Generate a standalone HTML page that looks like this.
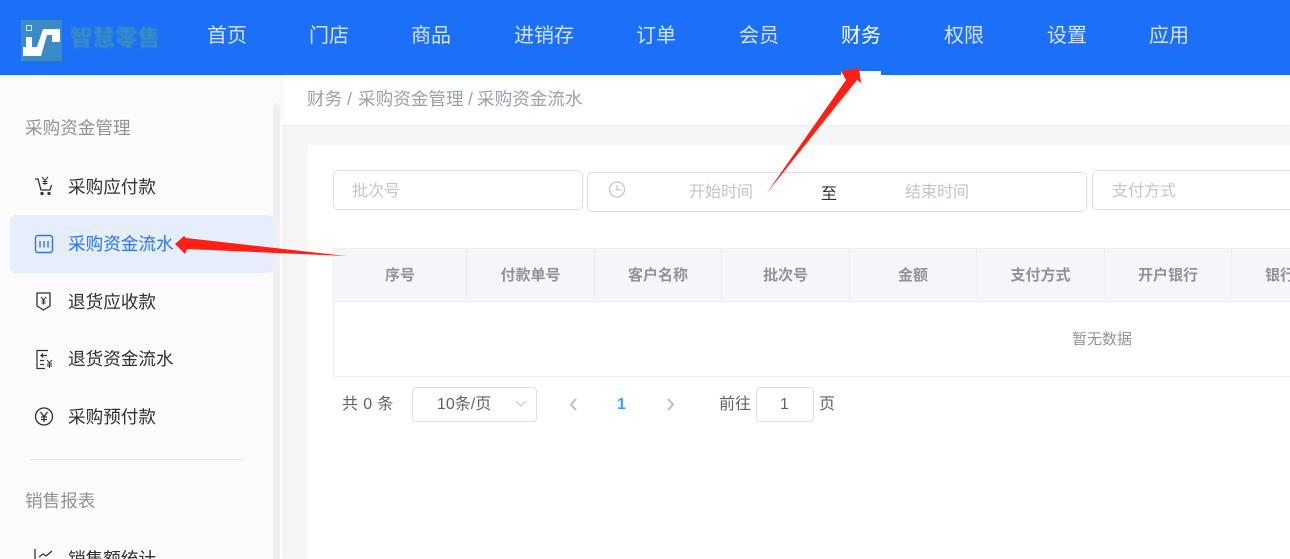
<!DOCTYPE html>
<html lang="zh"><head><meta charset="utf-8"><title>采购资金流水</title>
<style>
*{box-sizing:border-box}
html,body{margin:0;padding:0;width:1290px;height:559px;overflow:hidden}
#wrap{position:relative;width:1290px;height:559px;overflow:hidden;background:#f5f6f8;font-family:"Liberation Sans","Noto Sans CJK SC",sans-serif;font-size:14px;color:#606266}
.a{position:absolute;white-space:nowrap}
#top{left:0;top:0;width:1290px;height:75px;background:#1c70f8}
.n{top:22px;font-size:20px;line-height:28px;color:#d3e2fd}
#side{left:0;top:75px;width:283px;height:484px;background:#fbfbfc;box-shadow:1px 0 3px rgba(0,0,0,.04)}
.g{left:25px;font-size:17.6px;line-height:26px;color:#909399}
.m{left:68px;font-size:17.6px;line-height:26px;color:#303133}
.ic{position:absolute;left:32px}
.box{border:1px solid #dcdfe6;border-radius:5px;background:#fff}
.ph{font-size:16px;line-height:22px;color:#c0c4cc}
.bc{top:87px;font-size:17.6px;line-height:24px;color:#97a0ad}
.th{top:249px;height:52px;line-height:53px;font-size:15px;font-weight:700;color:#909399;text-align:center;border-right:1px solid #ebeef5}
.pg{font-size:16px;line-height:22px}
</style></head><body><div id="wrap">
<div class="a" id="top"></div>
<svg class="a" style="left:21px;top:20px" width="41" height="41" viewBox="0 0 41 41"><rect width="41" height="41" fill="#3d8bc4"/><rect x="5.500" y="5.500" width="5" height="5" fill="none" stroke="#cfe3f2"/><path d="M2 36V27H5V17H11V27H16L22 9H39V22H31V15H26L20 36Z" fill="#fff"/></svg>
<div class="a" style="left:70px;top:24px;font-size:22.500px;line-height:30px;font-weight:700;color:#3b90bd;filter:blur(.8px)">智慧零售</div>
<div class="a n" style="left:207px">首页</div>
<div class="a n" style="left:309px">门店</div>
<div class="a n" style="left:411px">商品</div>
<div class="a n" style="left:514px">进销存</div>
<div class="a n" style="left:636px">订单</div>
<div class="a n" style="left:739px">会员</div>
<div class="a n" style="left:841px;color:#fff">财务</div>
<div class="a n" style="left:944px">权限</div>
<div class="a n" style="left:1047px">设置</div>
<div class="a n" style="left:1149px">应用</div>
<div class="a" style="left:841px;top:71px;width:40px;height:4px;background:#fff"></div>

<div class="a" id="side"></div>
<div class="a" style="left:273px;top:103px;width:7px;height:456px;background:#f0f0f1;border-radius:4px 4px 0 0"></div>
<div class="a" style="left:10px;top:215px;width:263px;height:58px;background:#e6edfb;border-radius:6px"></div>
<div class="a g" style="top:115px">采购资金管理</div>
<div class="a m" style="top:174px">采购应付款</div>
<div class="a m" style="top:231px;color:#2b74f6">采购资金流水</div>
<div class="a m" style="top:289px">退货应收款</div>
<div class="a m" style="top:346px">退货资金流水</div>
<div class="a m" style="top:404px">采购预付款</div>
<div class="a" style="left:30px;top:459px;width:215px;height:1px;background:#e8e8ea"></div>
<div class="a g" style="top:488px">销售报表</div>
<div class="a m" style="top:546px">销售额统计</div>

<svg class="ic" style="top:174px" width="24" height="24" viewBox="0 0 24 24" fill="none" stroke="#303133" stroke-width="1.300"><path d="M3 5h3l3 11h9l1.500-5"/><circle cx="10" cy="19.500" r="1" fill="#303133"/><circle cx="17" cy="19.500" r="1" fill="#303133"/><path d="M10 3l3 3.500L16 3M13 6.500V11M10.500 7.500h5M10.500 9.500h5" stroke-width="1"/></svg>
<svg class="ic" style="top:232px" width="24" height="24" viewBox="0 0 24 24" fill="none" stroke="#2b74f6" stroke-width="1.400"><rect x="3.500" y="3.500" width="17" height="17" rx="2.500"/><path d="M8 9v6.500M12 9v6.500M16 9v6.500"/></svg>
<svg class="ic" style="top:289px;left:31px" width="24" height="24" viewBox="0 0 24 24" fill="none" stroke="#303133" stroke-width="1.300"><path d="M6 4h13v13l-6.500 4L6 17z" stroke-linejoin="round"/><path d="M10 8l2.500 3L15 8M12.500 11v4.500M10.500 12h4M10.500 14h4" stroke-width="1"/></svg>
<svg class="ic" style="top:347px" width="24" height="24" viewBox="0 0 24 24" fill="none" stroke="#303133" stroke-width="1.200"><path d="M16 3.500H5v18h8"/><path d="M15 8.500H9M11 6.500l-2 2 2 2M8 13.500h4M8 17.500h4"/><path d="M15 13l2.500 3 2.500-3M17.500 16v5M15 17h5M15 19h5" stroke-width="1"/></svg>
<svg class="ic" style="top:404px" width="24" height="24" viewBox="0 0 24 24" fill="none" stroke="#303133" stroke-width="1.300"><circle cx="12" cy="12.500" r="8.500"/><path d="M8.500 8l3.500 4.500L15.500 8M12 12.500V18M9 13h6M9 15.500h6"/></svg>
<svg class="ic" style="top:546px" width="24" height="14" viewBox="0 0 24 14" fill="none" stroke="#303133" stroke-width="1.300"><path d="M3 3v11M7 11l4-3 3 2 6-5"/></svg>

<div class="a" style="left:283px;top:75px;width:1007px;height:50px;background:#fff;box-shadow:0 1px 2px rgba(0,0,0,.05)"></div>
<div class="a bc" style="left:307px">财务</div>
<div class="a bc" style="left:347px">/</div>
<div class="a bc" style="left:358px">采购资金管理</div>
<div class="a bc" style="left:468px">/</div>
<div class="a bc" style="left:477px">采购资金流水</div>
<div class="a" style="left:308px;top:145px;width:982px;height:414px;background:#fff"></div>

<div class="a box" style="left:333px;top:170px;width:250px;height:40px"></div>
<div class="a ph" style="left:352px;top:181px">批次号</div>
<div class="a box" style="left:587px;top:172px;width:500px;height:40px"></div>
<svg class="a" style="left:608px;top:181px" width="18" height="18" viewBox="0 0 18 18" fill="none" stroke="#c0c4cc" stroke-width="1.300"><circle cx="9" cy="8.500" r="7.500"/><path d="M9 4v5h4.500"/></svg>
<div class="a ph" style="left:689px;top:182px">开始时间</div>
<div class="a" style="left:821px;top:184px;font-size:16px;line-height:22px;color:#303133">至</div>
<div class="a ph" style="left:905px;top:182px">结束时间</div>
<div class="a box" style="left:1092px;top:170px;width:210px;height:40px"></div>
<div class="a ph" style="left:1112px;top:181px">支付方式</div>

<div class="a" style="left:333px;top:248px;width:970px;height:129px;border:1px solid #ebeef5;background:#fff"></div>
<div class="a" style="left:334px;top:249px;width:956px;height:53px;background:#f4f6fa;border-bottom:1px solid #ebeef5"></div>
<div class="a th" style="left:334px;width:133px">序号</div>
<div class="a th" style="left:467px;width:128px">付款单号</div>
<div class="a th" style="left:595px;width:127px">客户名称</div>
<div class="a th" style="left:722px;width:128px">批次号</div>
<div class="a th" style="left:850px;width:127px">金额</div>
<div class="a th" style="left:977px;width:128px">支付方式</div>
<div class="a th" style="left:1105px;width:127px">开户银行</div>
<div class="a th" style="left:1232px;width:90px;border:0;text-align:left;padding-left:33px">银行卡号</div>
<div class="a" style="left:1072px;top:330px;font-size:15px;line-height:20px;color:#909399">暂无数据</div>

<div class="a pg" style="left:342px;top:394px;letter-spacing:.4px">共 0 条</div>
<div class="a box" style="left:412px;top:387px;width:125px;height:35px;border-radius:4px"></div>
<div class="a pg" style="left:437px;top:394px">10条/页</div>
<svg class="a" style="left:514px;top:398px" width="14" height="12" viewBox="0 0 14 12" fill="none" stroke="#c0c4cc" stroke-width="1.100"><path d="M2 3l5 5 5-5"/></svg>
<svg class="a" style="left:567px;top:397px" width="12" height="15" viewBox="0 0 12 15" fill="none" stroke="#b9bdc4" stroke-width="2"><path d="M9 2L4 7.500 9 13"/></svg>
<div class="a pg" style="left:617px;top:394px;font-weight:700;color:#409eff">1</div>
<svg class="a" style="left:665px;top:397px" width="12" height="15" viewBox="0 0 12 15" fill="none" stroke="#b9bdc4" stroke-width="2"><path d="M3 2l5 5.500L3 13"/></svg>
<div class="a pg" style="left:719px;top:394px">前往</div>
<div class="a box" style="left:756px;top:387px;width:58px;height:35px;border-radius:4px"></div>
<div class="a pg" style="left:780px;top:394px">1</div>
<div class="a pg" style="left:819px;top:394px">页</div>

<svg class="a" style="left:0;top:0" width="1290" height="559" viewBox="0 0 1290 559"><path d="M766 194L846 80 841 71 859 68 861 83 857 80Z" fill="#fe2015"/><path d="M346 256L186 238 184 236 175 244 185 254 187 249Z" fill="#fe2015"/></svg>
</div></body></html>
